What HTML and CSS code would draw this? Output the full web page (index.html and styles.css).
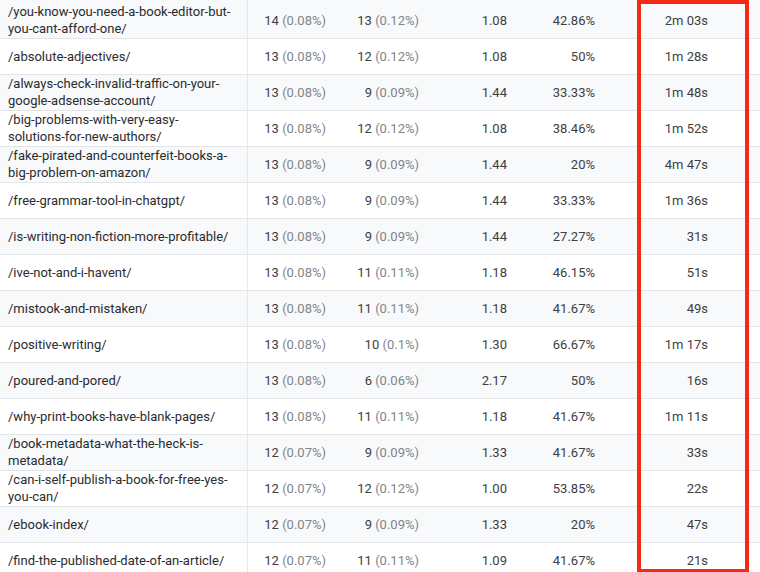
FILE: index.html
```html
<!DOCTYPE html>
<html lang="en">
<head>
<meta charset="utf-8">
<title>Pages report</title>
<link rel="stylesheet" href="styles.css">
</head>
<body>
<div class="wrap">
<table class="report">
<colgroup>
<col class="c-page"><col class="c-num"><col class="c-num"><col class="c-sm"><col class="c-sm"><col class="c-time"><col class="c-rest">
</colgroup>
<tbody>
<tr class="first"><td class="page">/you-know-you-need-a-book-editor-but-you-cant-afford-one/</td><td class="n">14 <span class="pct">(0.08%)</span></td><td class="n">13 <span class="pct">(0.12%)</span></td><td class="n">1.08</td><td class="n">42.86%</td><td class="n">2m 03s</td><td></td></tr>
<tr><td class="page">/absolute-adjectives/</td><td class="n">13 <span class="pct">(0.08%)</span></td><td class="n">12 <span class="pct">(0.12%)</span></td><td class="n">1.08</td><td class="n">50%</td><td class="n">1m 28s</td><td></td></tr>
<tr><td class="page">/always-check-invalid-traffic-on-your-google-adsense-account/</td><td class="n">13 <span class="pct">(0.08%)</span></td><td class="n">9 <span class="pct">(0.09%)</span></td><td class="n">1.44</td><td class="n">33.33%</td><td class="n">1m 48s</td><td></td></tr>
<tr><td class="page">/big-problems-with-very-easy-solutions-for-new-authors/</td><td class="n">13 <span class="pct">(0.08%)</span></td><td class="n">12 <span class="pct">(0.12%)</span></td><td class="n">1.08</td><td class="n">38.46%</td><td class="n">1m 52s</td><td></td></tr>
<tr><td class="page">/fake-pirated-and-counterfeit-books-a-big-problem-on-amazon/</td><td class="n">13 <span class="pct">(0.08%)</span></td><td class="n">9 <span class="pct">(0.09%)</span></td><td class="n">1.44</td><td class="n">20%</td><td class="n">4m 47s</td><td></td></tr>
<tr><td class="page">/free-grammar-tool-in-chatgpt/</td><td class="n">13 <span class="pct">(0.08%)</span></td><td class="n">9 <span class="pct">(0.09%)</span></td><td class="n">1.44</td><td class="n">33.33%</td><td class="n">1m 36s</td><td></td></tr>
<tr><td class="page">/is-writing-non-fiction-more-profitable/</td><td class="n">13 <span class="pct">(0.08%)</span></td><td class="n">9 <span class="pct">(0.09%)</span></td><td class="n">1.44</td><td class="n">27.27%</td><td class="n">31s</td><td></td></tr>
<tr><td class="page">/ive-not-and-i-havent/</td><td class="n">13 <span class="pct">(0.08%)</span></td><td class="n">11 <span class="pct">(0.11%)</span></td><td class="n">1.18</td><td class="n">46.15%</td><td class="n">51s</td><td></td></tr>
<tr><td class="page">/mistook-and-mistaken/</td><td class="n">13 <span class="pct">(0.08%)</span></td><td class="n">11 <span class="pct">(0.11%)</span></td><td class="n">1.18</td><td class="n">41.67%</td><td class="n">49s</td><td></td></tr>
<tr><td class="page">/positive-writing/</td><td class="n">13 <span class="pct">(0.08%)</span></td><td class="n">10 <span class="pct">(0.1%)</span></td><td class="n">1.30</td><td class="n">66.67%</td><td class="n">1m 17s</td><td></td></tr>
<tr><td class="page">/poured-and-pored/</td><td class="n">13 <span class="pct">(0.08%)</span></td><td class="n">6 <span class="pct">(0.06%)</span></td><td class="n">2.17</td><td class="n">50%</td><td class="n">16s</td><td></td></tr>
<tr><td class="page">/why-print-books-have-blank-pages/</td><td class="n">13 <span class="pct">(0.08%)</span></td><td class="n">11 <span class="pct">(0.11%)</span></td><td class="n">1.18</td><td class="n">41.67%</td><td class="n">1m 11s</td><td></td></tr>
<tr><td class="page">/book-metadata-what-the-heck-is-metadata/</td><td class="n">12 <span class="pct">(0.07%)</span></td><td class="n">9 <span class="pct">(0.09%)</span></td><td class="n">1.33</td><td class="n">41.67%</td><td class="n">33s</td><td></td></tr>
<tr><td class="page">/can-i-self-publish-a-book-for-free-yes-you-can/</td><td class="n">12 <span class="pct">(0.07%)</span></td><td class="n">12 <span class="pct">(0.12%)</span></td><td class="n">1.00</td><td class="n">53.85%</td><td class="n">22s</td><td></td></tr>
<tr><td class="page">/ebook-index/</td><td class="n">12 <span class="pct">(0.07%)</span></td><td class="n">9 <span class="pct">(0.09%)</span></td><td class="n">1.33</td><td class="n">20%</td><td class="n">47s</td><td></td></tr>
<tr><td class="page">/find-the-published-date-of-an-article/</td><td class="n">12 <span class="pct">(0.07%)</span></td><td class="n">11 <span class="pct">(0.11%)</span></td><td class="n">1.09</td><td class="n">41.67%</td><td class="n">21s</td><td></td></tr>
</tbody>
</table>
<div class="highlight"></div>
</div>
</body>
</html>
```

FILE: styles.css
```css
html, body {
  margin: 0;
  padding: 0;
  background: #ffffff;
  overflow: hidden;
}
.wrap {
  position: relative;
  width: 760px;
  height: 572px;
  overflow: hidden;
}
.report {
  width: 760px;
  border-collapse: collapse;
  table-layout: fixed;
  font-family: Roboto, "Liberation Sans", sans-serif;
  font-size: 13px;
  color: #3c4043;
}
.c-page { width: 247px; }
.c-num { width: 93px; }
.c-sm { width: 88px; }
.c-time { width: 113px; }
.c-rest { width: 38px; }
.report tr {
  height: 36px;
}
.report tr.first {
  height: 38px;
}
.report tr.first td {
  padding-top: 3px;
}
.report tr:nth-child(odd) {
  background: #f8f9fa;
}
.report td {
  border-bottom: 1px solid #e3e4e6;
  padding: 0 14px 0 8px;
  line-height: 17px;
  vertical-align: middle;
}
.report td.page {
  color: #2a2b2e;
  border-right: 1px solid #e6e7e9;
  padding-right: 14px;
}
.report td.n {
  text-align: right;
  white-space: nowrap;
}
.pct {
  color: #80868b;
}
.highlight {
  position: absolute;
  left: 637px;
  top: 0;
  width: 112px;
  height: 573px;
  box-sizing: border-box;
  border: 4px solid #f52a14;
}
```
